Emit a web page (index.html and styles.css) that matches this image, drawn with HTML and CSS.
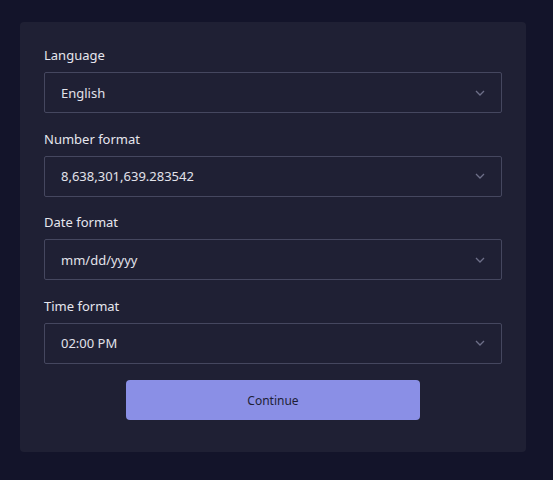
FILE: index.html
```html
<!DOCTYPE html>
<html>
<head>
<meta charset="utf-8">
<link rel="stylesheet" href="styles.css">
</head>
<body>
<div class="card">
  <div class="field">
    <div class="label">Language</div>
    <div class="select"><span>English</span><svg class="chev" width="10" height="6" viewBox="0 0 10 6"><path d="M1 1l4 4 4-4" fill="none" stroke="#6d6f88" stroke-width="1.3"/></svg></div>
  </div>
  <div class="field">
    <div class="label">Number format</div>
    <div class="select"><span>8,638,301,639.283542</span><svg class="chev" width="10" height="6" viewBox="0 0 10 6"><path d="M1 1l4 4 4-4" fill="none" stroke="#6d6f88" stroke-width="1.3"/></svg></div>
  </div>
  <div class="field">
    <div class="label">Date format</div>
    <div class="select"><span>mm/dd/yyyy</span><svg class="chev" width="10" height="6" viewBox="0 0 10 6"><path d="M1 1l4 4 4-4" fill="none" stroke="#6d6f88" stroke-width="1.3"/></svg></div>
  </div>
  <div class="field">
    <div class="label">Time format</div>
    <div class="select"><span>02:00 PM</span><svg class="chev" width="10" height="6" viewBox="0 0 10 6"><path d="M1 1l4 4 4-4" fill="none" stroke="#6d6f88" stroke-width="1.3"/></svg></div>
  </div>
  <div class="actions">
    <button class="btn">Continue</button>
  </div>
</div>
</body>
</html>
```
FILE: styles.css
```css
html, body {
  margin: 0;
  padding: 0;
  background: #13142a;
  height: 100%;
}
body {
  font-family: "Noto Sans", "Open Sans", sans-serif;
  padding: 22px 0 0 20px;
  box-sizing: border-box;
}
.card {
  width: 506px;
  box-sizing: border-box;
  background: #1f2034;
  border-radius: 4px;
  padding: 24px 24px 32px 24px;
  display: flex;
  flex-direction: column;
  gap: 16.5px;
}
.field {
  display: flex;
  flex-direction: column;
  gap: 8px;
}
.label {
  color: #e6e6ee;
  font-size: 13px;
  line-height: 18px;
}
.select {
  height: 41px;
  box-sizing: border-box;
  border: 1px solid #45475f;
  border-radius: 2px;
  display: flex;
  align-items: center;
  justify-content: space-between;
  padding: 0 16px 0 16px;
  color: #e2e2ea;
  font-size: 13px;
  width: 458px;
}
.actions {
  display: flex;
  justify-content: center;
}
.btn {
  width: 294px;
  height: 40px;
  border: none;
  border-radius: 4px;
  background: #8a8fe6;
  color: #1e1f36;
  font-family: "Noto Sans", "Open Sans", sans-serif;
  font-size: 12px;
}
```
